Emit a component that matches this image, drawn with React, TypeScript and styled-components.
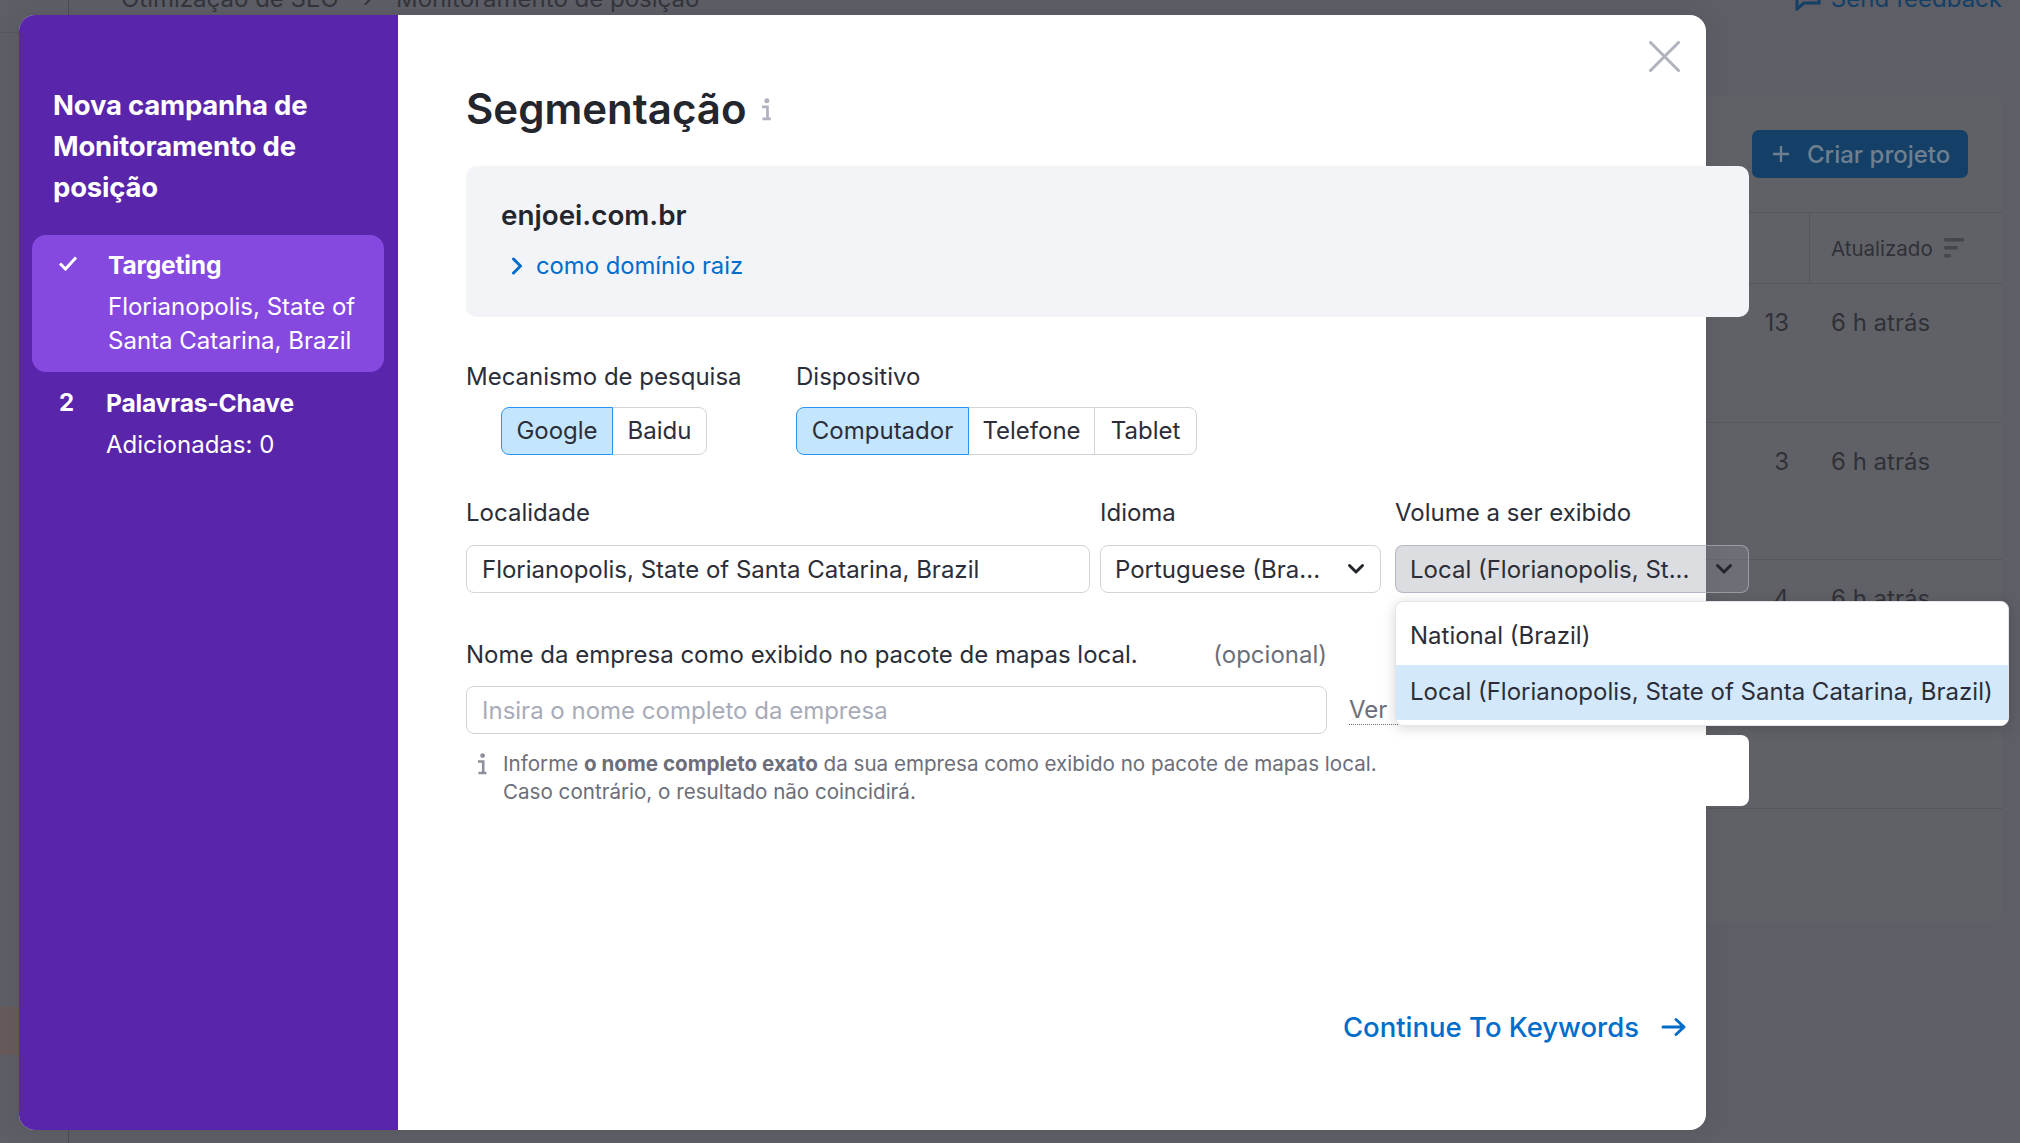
import React from 'react';
import styled, { createGlobalStyle } from 'styled-components';

const GlobalStyle = createGlobalStyle`
  html, body {
    margin: 0;
    padding: 0;
    background: #5d5e66;
    font-family: Inter, "Noto Sans", "Liberation Sans", sans-serif;
    color: #2b2e38;
  }
  * { box-sizing: border-box; }
`;

const Page = styled.div`
  position: relative;
  display: flex;
  width: 2020px;
  height: 1143px;
  overflow: hidden;
  background: #5d5e66;
`;

// Dimmed page behind the modal
const Rail = styled.div`
  flex: 0 0 69px;
  display: flex;
  flex-direction: column;
  border-right: 1px solid #4d4e55;
`;

const RailTop = styled.div`
  height: 33px;
  border-bottom: 1px solid #55565d;
`;

const RailMark = styled.div`
  height: 48px;
  margin-top: 974px;
  background: #665a5b;
`;

const Behind = styled.div`
  flex: 1;
  display: flex;
  flex-direction: column;
  padding-right: 18px;
`;

const TopBar = styled.div`
  display: flex;
  align-items: center;
  justify-content: space-between;
  height: 28px;
  margin-top: -16px;
  padding-left: 52px;
  font-size: 24px;
  color: #34353c;
`;

const Crumbs = styled.div`
  display: flex;
  align-items: center;
  gap: 24px;
`;

const Feedback = styled.div`
  display: flex;
  align-items: center;
  gap: 10px;
  color: #143f66;
`;

const BgCard = styled.div`
  display: flex;
  flex-direction: column;
  height: 826px;
  margin-top: 84px;
  margin-left: 20px;
  background: #606166;
  border-radius: 8px;
`;

const CardHead = styled.div`
  display: flex;
  justify-content: flex-end;
  height: 117px;
  padding: 34px 34px 0 0;
  border-bottom: 1px solid #56575c;
`;

const CreateButton = styled.div`
  display: flex;
  align-items: center;
  gap: 17px;
  width: 216px;
  height: 48px;
  padding-left: 20px;
  background: #143f66;
  border-radius: 7px;
  color: #6e7f90;
  font-size: 24px;
  font-weight: 500;
`;

const BgRow = styled.div<{ $h: number; $pad?: number; $line?: boolean }>`
  display: flex;
  height: ${(p) => p.$h}px;
  padding-top: ${(p) => p.$pad ?? 24}px;
  border-bottom: ${(p) => (p.$line === false ? 'none' : '1px solid #56575c')};
  font-size: 24px;
  color: #303138;
`;

const CountCell = styled.div`
  width: 1720px;
  text-align: right;
  padding-right: 20px;
`;

const HeaderCell = styled.div`
  display: flex;
  align-items: center;
  gap: 10px;
  height: 71px;
  padding-left: 21px;
  border-left: 1px solid #56575c;
  font-size: 20.5px;
`;

const TimeCell = styled.div`
  padding-left: 22px;
`;

// Modal
const Modal = styled.div`
  position: absolute;
  left: 19px;
  top: 15px;
  display: flex;
  width: 1687px;
  height: 1115px;
  border-radius: 16px;
  background: #fff;
  box-shadow: 0 0 24px rgba(0, 0, 0, 0.08);
`;

const Sidebar = styled.aside`
  flex: 0 0 379px;
  padding-top: 70px;
  background: #5925aa;
  border-radius: 16px 0 0 16px;
  color: #fff;
`;

const SideTitle = styled.div`
  padding: 0 20px 0 34px;
  font-size: 27.5px;
  line-height: 41px;
  font-weight: 700;
  letter-spacing: -0.2px;
`;

const Step = styled.div<{ $active?: boolean }>`
  display: flex;
  margin: ${(p) => (p.$active ? '27px' : '14px')} 14px 0 13px;
  padding: ${(p) => (p.$active ? '13px 0 14px 26px' : '0 0 0 27px')};
  background: ${(p) => (p.$active ? '#8549e0' : 'transparent')};
  border-radius: 14px;
`;

const StepMark = styled.div<{ $w: number; $up?: number }>`
  flex: 0 0 ${(p) => p.$w}px;
  margin-top: ${(p) => -(p.$up ?? 0)}px;
  font-size: 24px;
  line-height: 34px;
  font-weight: 700;
`;

const StepName = styled.div`
  font-size: 24.6px;
  line-height: 34px;
  font-weight: 700;
  letter-spacing: -0.2px;
`;

const StepInfo = styled.div`
  margin-top: 8px;
  font-size: 24px;
  line-height: 34px;
`;

const Main = styled.main`
  position: relative;
  flex: 0 0 1308px;
  min-width: 0;
  display: flex;
  flex-direction: column;
  align-items: flex-start;
  padding: 71px 19px 85px 68px;
`;

const CloseButton = styled.button`
  position: absolute;
  top: 26px;
  right: 26px;
  display: flex;
  padding: 0;
  border: 0;
  background: none;
`;

const TitleRow = styled.div`
  display: flex;
  align-items: center;
  gap: 14px;
`;

const Title = styled.h1`
  margin: 0;
  font-size: 42px;
  line-height: 46px;
  font-weight: 600;
  color: #24262e;
`;

const DomainBox = styled.div`
  width: 1283px;
  height: 151px;
  margin-top: 34px;
  padding: 33px 35px 0;
  background: #f3f4f8;
  border-radius: 10px;
`;

const Domain = styled.div`
  font-size: 27.8px;
  line-height: 32px;
  font-weight: 600;
  color: #24262e;
`;

const DomainLink = styled.div`
  display: flex;
  align-items: center;
  gap: 13px;
  margin-top: 20px;
  padding-left: 10px;
  font-size: 23.8px;
  line-height: 30px;
  color: #006dca;
`;

const FormRow = styled.div<{ $top: number }>`
  display: flex;
  margin-top: ${(p) => p.$top}px;
`;

const Field = styled.div<{ $w: number; $mr?: number }>`
  position: relative;
  width: ${(p) => p.$w}px;
  margin-right: ${(p) => p.$mr ?? 0}px;
`;

const Label = styled.div<{ $gap: number }>`
  display: flex;
  justify-content: space-between;
  margin-bottom: ${(p) => p.$gap}px;
  font-size: 24px;
  line-height: 28px;
  color: #2b2e38;
`;

const Optional = styled.span`
  color: #6c6e79;
`;

const Segment = styled.div<{ $ml?: number }>`
  display: flex;
  height: 48px;
  margin-left: ${(p) => p.$ml ?? 0}px;
`;

const SegmentItem = styled.div<{ $w: number; $on?: boolean }>`
  position: relative;
  z-index: ${(p) => (p.$on ? 1 : 0)};
  display: flex;
  align-items: center;
  justify-content: center;
  width: ${(p) => p.$w}px;
  margin-left: -1px;
  padding-bottom: 2px;
  border: 1px solid ${(p) => (p.$on ? '#2b94f0' : '#d1d4db')};
  background: ${(p) => (p.$on ? '#c4e5fe' : '#fff')};
  font-size: 24px;
  color: #2b2e38;

  &:first-child {
    margin-left: 0;
    border-radius: 8px 0 0 8px;
  }
  &:last-child {
    border-radius: 0 8px 8px 0;
  }
`;

const Input = styled.div<{ $ph?: boolean }>`
  display: flex;
  align-items: center;
  height: 48px;
  padding: 0 15px;
  border: 1px solid #d1d4db;
  border-radius: 8px;
  background: #fff;
  font-size: 24px;
  white-space: nowrap;
  color: ${(p) => (p.$ph ? '#a8abb8' : '#2b2e38')};
`;

const SelectBox = styled.div<{ $open?: boolean }>`
  display: flex;
  align-items: center;
  justify-content: space-between;
  height: 48px;
  padding: 0 15px 0 14px;
  border: 1px solid ${(p) => (p.$open ? 'rgba(170, 173, 185, 0.75)' : '#d1d4db')};
  border-radius: 8px;
  background: ${(p) => (p.$open ? 'rgba(138, 142, 155, 0.3)' : '#fff')};
  font-size: 24px;
  white-space: nowrap;
  color: #2b2e38;
`;

const Menu = styled.div`
  position: absolute;
  left: 0;
  top: 102px;
  z-index: 5;
  width: 614px;
  height: 125px;
  padding-top: 7px;
  background: #fff;
  border: 1px solid #e4e5ea;
  border-radius: 8px;
  box-shadow: 0 2px 14px rgba(0, 0, 0, 0.16);
`;

const MenuItem = styled.div<{ $on?: boolean }>`
  display: flex;
  align-items: center;
  height: 55px;
  padding-left: 14px;
  padding-bottom: 2px;
  background: ${(p) => (p.$on ? '#d3e9fb' : 'transparent')};
  font-size: 24px;
  white-space: nowrap;
  color: #2b2e38;

  & + & {
    margin-top: 1px;
  }
`;

const ExampleLink = styled.div`
  margin-left: 22px;
  margin-top: 45px;
  height: 39px;
  font-size: 24px;
  line-height: 48px;
  white-space: nowrap;
  color: #6c6e79;
  border-bottom: 1px dotted #6c6e79;
`;

const Hint = styled.div`
  display: flex;
  width: 1283px;
  height: 71px;
  margin-top: 1px;
  padding: 15px 0 0 11px;
  background: #fff;
  border-radius: 8px;
`;

const HintIcon = styled.div`
  flex: 0 0 26px;
  padding-top: 3px;
`;

const HintText = styled.div`
  font-size: 20.6px;
  line-height: 28px;
  color: #6c6e79;

  b {
    font-weight: 700;
  }
`;

const ContinueLink = styled.div`
  display: flex;
  align-items: center;
  gap: 22px;
  margin-top: auto;
  margin-left: auto;
  font-size: 27.5px;
  line-height: 36px;
  font-weight: 500;
  color: #006dca;
`;

function InfoGlyph({ h, color }: { h: number; color: string }) {
  return (
    <svg width={(h * 10) / 22} height={h} viewBox="0 0 10 22" fill="none">
      <circle cx="5.6" cy="2.6" r="2.4" fill={color} />
      <path d="M1 8.5h5.2v10.5M1.4 20h8" stroke={color} strokeWidth="2.6" />
    </svg>
  );
}

function Chevron({ color = '#24262e' }: { color?: string }) {
  return (
    <svg width="18" height="12" viewBox="0 0 18 12" fill="none">
      <path d="M2.5 2.5 9 9l6.5-6.5" stroke={color} strokeWidth="3" strokeLinecap="round" strokeLinejoin="round" />
    </svg>
  );
}

function SortIcon() {
  return (
    <svg width="22" height="26" viewBox="0 0 22 26" fill="#45464c">
      <rect x="1" y="2" width="20" height="3.5" rx="1.5" />
      <rect x="1" y="10" width="14" height="3.5" rx="1.5" />
      <rect x="1" y="18" width="7" height="3.5" rx="1.5" />
    </svg>
  );
}

export default function App() {
  return (
    <Page>
      <GlobalStyle />
      <Rail>
        <RailTop />
        <RailMark />
      </Rail>
      <Behind>
        <TopBar>
          <Crumbs>
            <span>Otimização de SEO</span>
            <span>›</span>
            <span>Monitoramento de posição</span>
          </Crumbs>
          <Feedback>
            <svg width="26" height="26" viewBox="0 0 26 26" fill="none">
              <path d="M2 4h22v14H9l-7 6z" stroke="#143f66" strokeWidth="3" />
            </svg>
            <span>Send feedback</span>
          </Feedback>
        </TopBar>
        <BgCard>
          <CardHead>
            <CreateButton>
              <svg width="18" height="18" viewBox="0 0 18 18" fill="none">
                <path d="M9 1v16M1 9h16" stroke="#6e7f90" strokeWidth="2.4" />
              </svg>
              <span>Criar projeto</span>
            </CreateButton>
          </CardHead>
          <BgRow $h={71} $pad={0}>
            <CountCell />
            <HeaderCell>
              <span>Atualizado</span>
              <SortIcon />
            </HeaderCell>
          </BgRow>
          <BgRow $h={139}>
            <CountCell>13</CountCell>
            <TimeCell>6 h atrás</TimeCell>
          </BgRow>
          <BgRow $h={137}>
            <CountCell>3</CountCell>
            <TimeCell>6 h atrás</TimeCell>
          </BgRow>
          <BgRow $h={249}>
            <CountCell>4</CountCell>
            <TimeCell>6 h atrás</TimeCell>
          </BgRow>
          <BgRow $h={113} $line={false} />
        </BgCard>
      </Behind>

      <Modal>
        <Sidebar>
          <SideTitle>Nova campanha de Monitoramento de posição</SideTitle>
          <Step $active>
            <StepMark $w={50} $up={2}>
              <svg width="20" height="16" viewBox="0 0 20 16" fill="none">
                <path d="M2 8.5 7.5 14 18 2.5" stroke="#fff" strokeWidth="3" />
              </svg>
            </StepMark>
            <div>
              <StepName>Targeting</StepName>
              <StepInfo>
                Florianopolis, State of
                <br />
                Santa Catarina, Brazil
              </StepInfo>
            </div>
          </Step>
          <Step>
            <StepMark $w={47}>2</StepMark>
            <div>
              <StepName>Palavras-Chave</StepName>
              <StepInfo>Adicionadas: 0</StepInfo>
            </div>
          </Step>
        </Sidebar>

        <Main>
          <CloseButton aria-label="Fechar">
            <svg width="31" height="31" viewBox="0 0 31 31" fill="none">
              <path d="M1.5 1.5 29.5 29.5M29.5 1.5 1.5 29.5" stroke="#b0b3bf" strokeWidth="3" strokeLinecap="round" />
            </svg>
          </CloseButton>

          <TitleRow>
            <Title>Segmentação</Title>
            <InfoGlyph h={23} color="#b0b3bf" />
          </TitleRow>

          <DomainBox>
            <Domain>enjoei.com.br</Domain>
            <DomainLink>
              <svg width="12" height="18" viewBox="0 0 12 18" fill="none">
                <path d="M2.5 2 9.5 9l-7 7" stroke="#006dca" strokeWidth="3" strokeLinecap="round" strokeLinejoin="round" />
              </svg>
              <span>como domínio raiz</span>
            </DomainLink>
          </DomainBox>

          <FormRow $top={46}>
            <Field $w={330}>
              <Label $gap={16}>Mecanismo de pesquisa</Label>
              <Segment $ml={35}>
                <SegmentItem $w={112} $on>Google</SegmentItem>
                <SegmentItem $w={95}>Baidu</SegmentItem>
              </Segment>
            </Field>
            <Field $w={401}>
              <Label $gap={16}>Dispositivo</Label>
              <Segment>
                <SegmentItem $w={173} $on>Computador</SegmentItem>
                <SegmentItem $w={127}>Telefone</SegmentItem>
                <SegmentItem $w={103}>Tablet</SegmentItem>
              </Segment>
            </Field>
          </FormRow>

          <FormRow $top={44}>
            <Field $w={624} $mr={10}>
              <Label $gap={18}>Localidade</Label>
              <Input>Florianopolis, State of Santa Catarina, Brazil</Input>
            </Field>
            <Field $w={281} $mr={14}>
              <Label $gap={18}>Idioma</Label>
              <SelectBox>
                <span>Portuguese (Bra...</span>
                <Chevron />
              </SelectBox>
            </Field>
            <Field $w={354}>
              <Label $gap={18}>Volume a ser exibido</Label>
              <SelectBox $open>
                <span>Local (Florianopolis, St...</span>
                <Chevron />
              </SelectBox>
              <Menu>
                <MenuItem>National (Brazil)</MenuItem>
                <MenuItem $on>Local (Florianopolis, State of Santa Catarina, Brazil)</MenuItem>
              </Menu>
            </Field>
          </FormRow>

          <FormRow $top={48}>
            <Field $w={861}>
              <Label $gap={17}>
                <span>Nome da empresa como exibido no pacote de mapas local.</span>
                <Optional>(opcional)</Optional>
              </Label>
              <Input $ph>Insira o nome completo da empresa</Input>
            </Field>
            <ExampleLink>Ver exemplo</ExampleLink>
          </FormRow>

          <Hint>
            <HintIcon>
              <InfoGlyph h={22} color="#8d909c" />
            </HintIcon>
            <HintText>
              Informe <b>o nome completo exato</b> da sua empresa como exibido no pacote de mapas local.
              <br />
              Caso contrário, o resultado não coincidirá.
            </HintText>
          </Hint>

          <ContinueLink>
            <span>Continue To Keywords</span>
            <svg width="26" height="20" viewBox="0 0 26 20" fill="none">
              <path d="M2 10h21M15 2.5l8 7.5-8 7.5" stroke="#006dca" strokeWidth="3" strokeLinecap="round" strokeLinejoin="round" />
            </svg>
          </ContinueLink>
        </Main>
      </Modal>
    </Page>
  );
}
